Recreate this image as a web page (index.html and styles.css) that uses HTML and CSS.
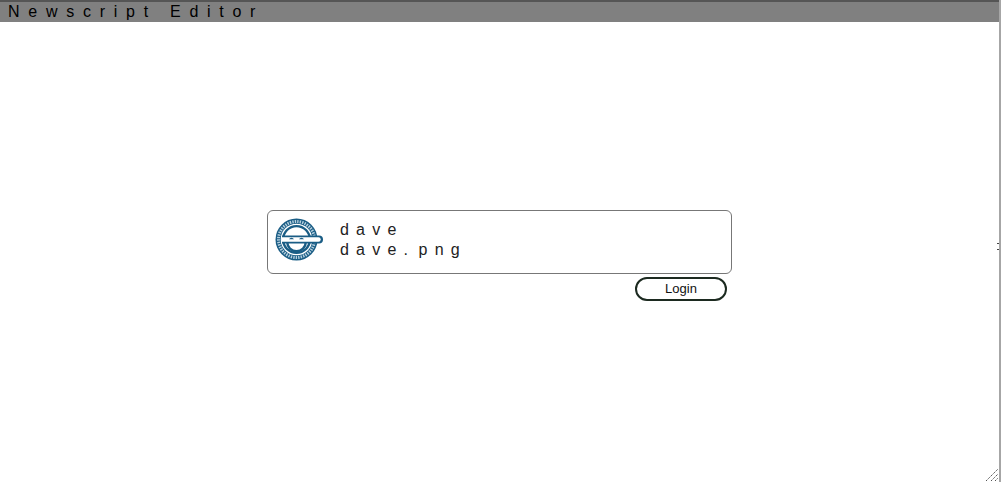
FILE: index.html
```html
<!DOCTYPE html>
<html lang="en">
<head>
<meta charset="UTF-8">
<meta name="viewport" content="width=device-width, initial-scale=1.0">
<title>Newscript Editor</title>
<link rel="stylesheet" href="styles.css">
</head>
<body>
<div class="window">
  <header class="titlebar">Newscript Editor</header>
  <main class="content">
    <div class="login">
      <div class="card">
        <svg class="avatar" viewBox="0 0 50 44" width="50" height="44">
          <!-- outer ring, dashes stand in for the tiny ring lettering -->
          <circle cx="21.500" cy="21.500" r="21" fill="#1a5d85"/>
          <circle cx="21.500" cy="21.500" r="18" fill="none" stroke="#b7d0df" stroke-width="3" stroke-dasharray="1.400 1.100"/>
          <circle cx="21.500" cy="21.500" r="15.800" fill="#fff"/>
          <circle cx="21.500" cy="21.500" r="13.400" fill="#fff" stroke="#1a5d85" stroke-width="2.400"/>
          <!-- smile -->
          <path d="M11 24a10.500 10.500 0 0 0 21 0z" fill="#1a5d85"/>
          <path d="M13.500 24.500a8 7.500 0 0 0 16 0z" fill="#fff"/>
          <!-- cap bar -->
          <path d="M7 17.500h37a4 4 0 0 1 0 8H7z" fill="#1a5d85"/>
          <path d="M7 19.300h36.500a2.200 2.200 0 0 1 0 4.400H7z" fill="#fff"/>
          <!-- eyes -->
          <path d="M14 21.300a2.800 2.800 0 0 1 5 0zM24 21.300a2.800 2.800 0 0 1 5 0z" fill="#1a5d85"/>
        </svg>
        <div class="names">
          <div>dave</div>
          <div>dave<span class="dot">.</span>png</div>
        </div>
      </div>
      <div class="actions">
        <button class="login-btn">Login</button>
      </div>
    </div>
    <div class="grip">
      <svg viewBox="0 0 14 14" width="14" height="14">
        <path d="M1 13 13 1M6 13l7-7M10 13l3-3" stroke="#555" stroke-width="1" stroke-dasharray="1.500 .8" fill="none"/>
      </svg>
    </div>
    <div class="splitter"></div>
  </main>
</div>
</body>
</html>
```

FILE: styles.css
```css
html, body {
  margin: 0;
  height: 100%;
  overflow: hidden;
  background: #fff;
}
.window {
  height: 482px;
  display: flex;
  flex-direction: column;
  border-right: 2px solid #a6a6a6;
  font-family: "Liberation Sans", Arial, sans-serif;
  color: #111;
}
.titlebar {
  height: 20px;
  padding-left: 8px;
  border-top: 2px solid #555;
  background: #808080;
  color: #000;
  font-size: 16px;
  line-height: 20px;
  letter-spacing: 8.730px;
  white-space: nowrap;
}
.content {
  flex: 1;
  position: relative;
  display: flex;
  flex-direction: column;
  align-items: center;
  padding-top: 188px;
}
.login {
  width: 465px;
}
.card {
  height: 62px;
  display: flex;
  align-items: center;
  gap: 15px;
  padding-left: 7px;
  border: 1px solid #777;
  border-radius: 6px;
}
.avatar {
  flex: none;
  margin-bottom: 5px;
}
.names {
  padding-bottom: 5px;
  font-size: 16px;
  line-height: 20px;
  letter-spacing: 7.200px;
  color: #222;
}
.dot {
  letter-spacing: 10.600px;
}
.actions {
  display: flex;
  justify-content: flex-end;
  padding: 3px 5px 0 0;
}
.login-btn {
  width: 92px;
  height: 24px;
  padding: 0 0 2px;
  border: 2px solid #1c2a20;
  border-radius: 12px;
  background: #fff;
  color: #111;
  font: 13px "Liberation Sans", Arial, sans-serif;
}
.grip {
  position: absolute;
  right: 0;
  bottom: 0;
  height: 14px;
}
.splitter {
  position: absolute;
  right: 0;
  top: 221px;
  width: 2px;
  height: 5px;
  border-top: 1px solid #444;
  border-bottom: 1px solid #444;
}
```
